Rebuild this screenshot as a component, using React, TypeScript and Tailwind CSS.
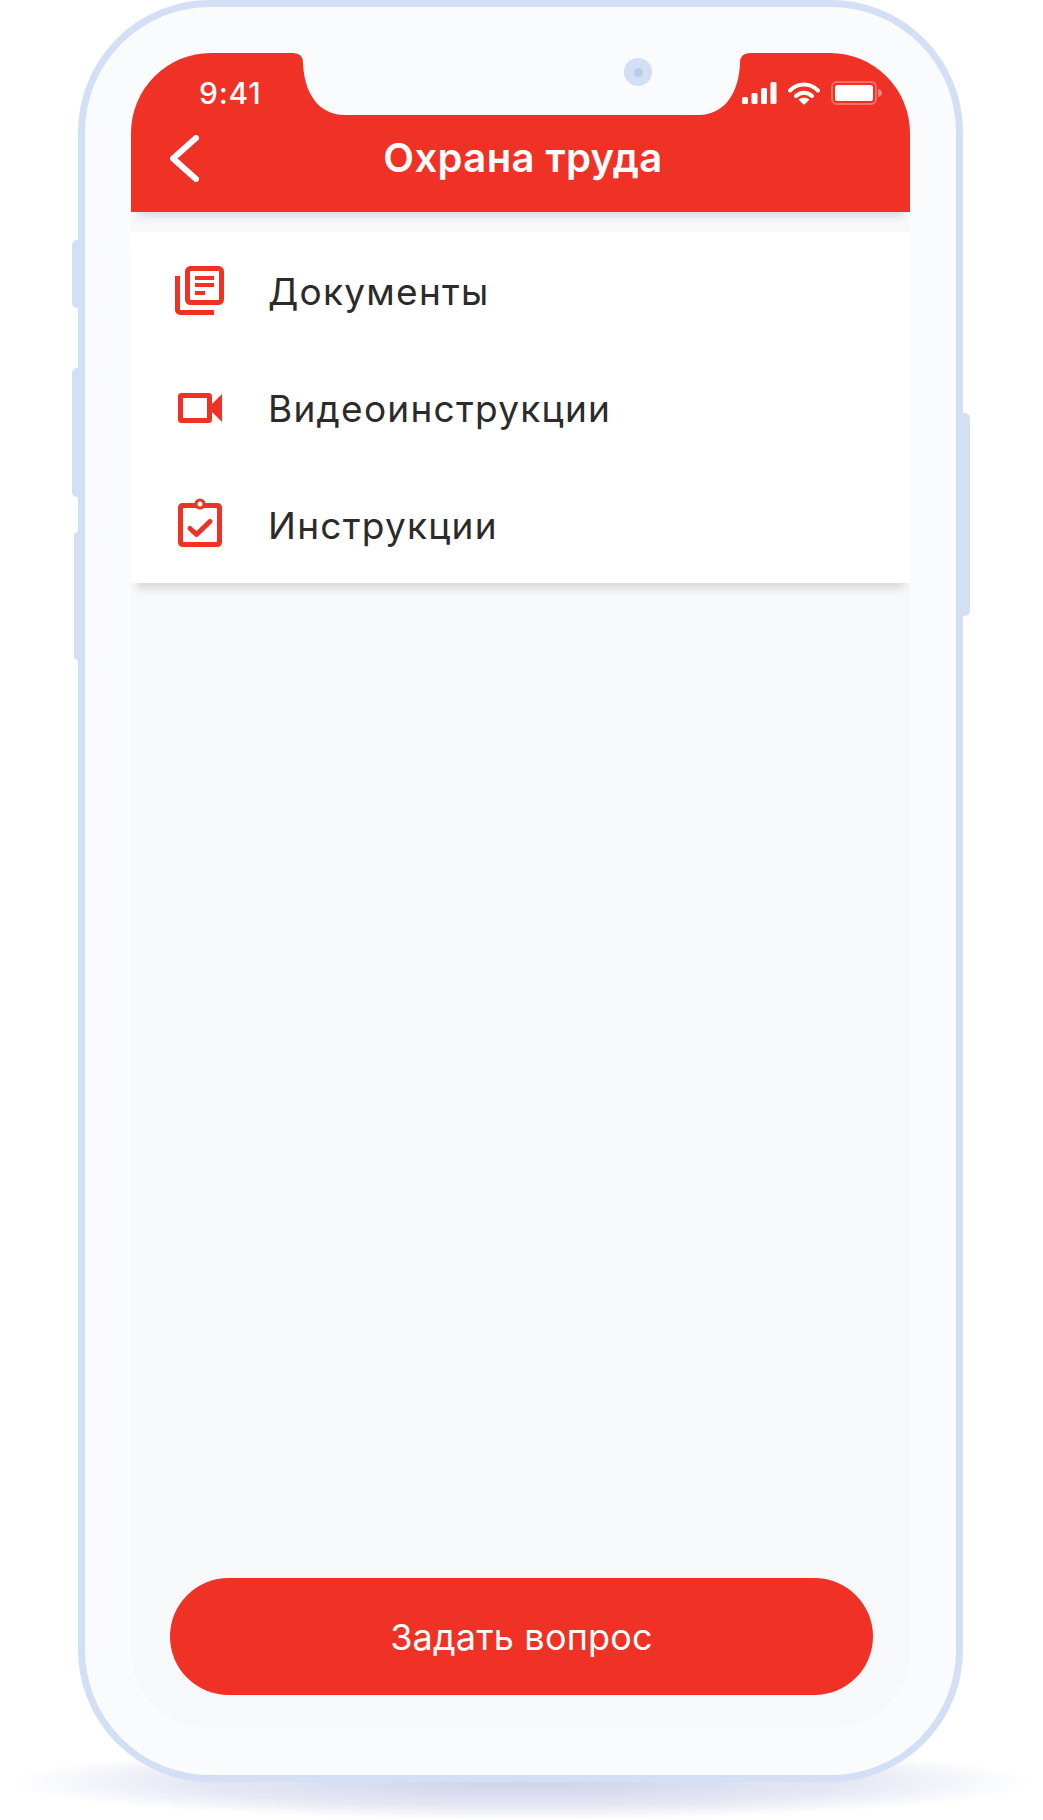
import React from "react";

const RED = "#f03226";

function DocsIcon() {
  return (
    <svg width="49" height="49" viewBox="0 0 49 49" fill="none">
      <path d="M2.5 10V44a2.5 2.5 0 0 0 2.5 2.5H39" stroke={RED} strokeWidth="5" />
      <rect x="12.5" y="2.5" width="34" height="34" rx="3" stroke={RED} strokeWidth="5" />
      <rect x="20" y="10" width="19" height="4" fill={RED} />
      <rect x="20" y="17" width="19" height="4" fill={RED} />
      <rect x="20" y="25" width="10" height="4" fill={RED} />
    </svg>
  );
}

function VideoIcon() {
  return (
    <svg width="44" height="30" viewBox="0 0 44 30" fill="none">
      <rect x="2.5" y="2.5" width="29" height="25" rx="1" stroke={RED} strokeWidth="5" />
      <path d="M33 12 44 1V29L33 18Z" fill={RED} />
    </svg>
  );
}

function ClipIcon() {
  return (
    <svg width="44" height="49" viewBox="0 0 44 49" fill="none" className="-mt-[4px]">
      <rect x="2.5" y="7.5" width="39" height="39" rx="2" stroke={RED} strokeWidth="5" />
      <circle cx="22" cy="6" r="4" fill="#fff" stroke={RED} strokeWidth="3" />
      <path d="M12 30.5 18.5 36.5 32 23.5" stroke={RED} strokeWidth="5" strokeLinecap="round" strokeLinejoin="round" />
    </svg>
  );
}

function Row({ icon, label }: { icon: React.ReactNode; label: string }) {
  return (
    <div className="flex h-[117px] items-center pl-[44px]">
      <div className="flex w-[49px] shrink-0 items-center justify-center">{icon}</div>
      <span className="ml-[44px] pt-[1px] text-[37px] leading-none tracking-[1.25px] text-[#2b2b2b]">{label}</span>
    </div>
  );
}

export default function App() {
  return (
    <div
      className="relative h-[1820px] w-[1043px] overflow-hidden bg-white pl-[78px]"
      style={{ fontFamily: '"Inter", "Noto Sans", sans-serif' }}
    >
      {/* floor shadow */}
      <div className="absolute bottom-[0px] left-[10px] h-[76px] w-[1023px] rounded-[50%] bg-[radial-gradient(closest-side,#cdd2ea_0%,#e6e8f4_65%,#ffffff_100%)]" />

      {/* side buttons */}
      <div className="absolute left-[72px] top-[240px] h-[68px] w-[10px] rounded-l-[5px] bg-[#d2dff5]" />
      <div className="absolute left-[72px] top-[368px] h-[129px] w-[10px] rounded-l-[5px] bg-[#d2dff5]" />
      <div className="absolute left-[74px] top-[532px] h-[128px] w-[8px] rounded-l-[4px] bg-[#d2dff5]" />
      <div className="absolute left-[960px] top-[413px] h-[203px] w-[10px] rounded-r-[5px] bg-[#d2dff5]" />

      {/* phone */}
      <div className="relative h-[1782px] w-[885px] rounded-[132px] border-[7px] border-[#d2dff5] bg-[#fafbfd] p-[46px]">
        <div className="flex h-[1675px] w-[779px] flex-col rounded-b-[76px] rounded-t-[80px] bg-[#f7f8fa]">
          {/* header */}
          <header className="relative z-10 h-[159px] shrink-0 rounded-t-[80px] bg-[#f03226] shadow-[0_10px_8px_-6px_rgba(0,0,0,0.12)]">
            {/* notch */}
            <svg className="absolute left-[162px] top-0" width="457" height="62" viewBox="0 0 457 62">
              <path
                d="M0 0Q10 0 10 10C11 38 24 62 52 62H405C433 62 446 38 447 10Q447 0 457 0Z"
                fill="#fafbfd"
              />
            </svg>
            {/* camera */}
            <div className="absolute left-[493px] top-[5px] flex h-[28px] w-[28px] items-center justify-center rounded-full bg-[#d2dff5]">
              <div className="h-[9px] w-[9px] rounded-full bg-[#bccce6]" />
            </div>
            <div className="relative flex h-[62px] items-end justify-between pb-[5px] pl-[68px] pr-[27px]">
              <span className="text-[30px] font-medium leading-[34px] tracking-[0.8px] text-white">9:41</span>
              <div className="flex items-center gap-[9px] pb-[5px]">
                <svg width="35" height="22" viewBox="0 0 35 22" fill="#fff">
                  <rect x="0" y="15" width="6" height="7" rx="1.5" />
                  <rect x="9.5" y="11" width="6" height="11" rx="1.5" />
                  <rect x="19" y="6" width="6" height="16" rx="1.5" />
                  <rect x="28.5" y="0" width="6" height="22" rx="1.5" />
                </svg>
                <svg width="32" height="23" viewBox="0 0 32 23" fill="none" className="ml-[2px]">
                  <path d="M2 8.5C10 .5 22 .5 30 8.5" stroke="#fff" strokeWidth="4" strokeLinecap="round" />
                  <path d="M8 14C12.5 9.5 19.5 9.5 24 14" stroke="#fff" strokeWidth="4" strokeLinecap="round" />
                  <path d="M16 23 10.5 17.5C13.5 15 18.5 15 21.5 17.5Z" fill="#fff" />
                </svg>
                <svg width="52" height="24" viewBox="0 0 52 24" fill="none" className="ml-[2px]">
                  <rect x="1" y="1" width="44" height="22" rx="5" stroke="#fff" strokeOpacity="0.3" strokeWidth="2" />
                  <rect x="4" y="4" width="38" height="16" rx="2.5" fill="#fff" />
                  <path d="M47 8C49.5 8.5 51 10 51 12S49.5 15.5 47 16Z" fill="#fff" fillOpacity="0.4" />
                </svg>
              </div>
            </div>
            <div className="grid h-[97px] grid-cols-[1fr_auto_1fr] items-center pb-[12px]">
              <svg className="ml-[39px] mt-[1px]" width="29" height="47" viewBox="0 0 29 47" fill="none">
                <path d="M26 3 3 23.5 26 44" stroke="#fff" strokeWidth="6" strokeLinecap="round" strokeLinejoin="round" />
              </svg>
              <h1 className="pl-[5px] text-center text-[40px] font-semibold leading-none tracking-[0.4px] text-white">Охрана труда</h1>
              <div />
            </div>
          </header>

          {/* list */}
          <div className="mt-[20px] shrink-0 bg-white shadow-[0_12px_8px_-6px_rgba(0,0,0,0.12)]">
            <Row icon={<DocsIcon />} label="Документы" />
            <Row icon={<VideoIcon />} label="Видеоинструкции" />
            <Row icon={<ClipIcon />} label="Инструкции" />
          </div>

          <div className="flex-1" />

          {/* button */}
          <button className="mb-[33px] ml-[39px] mr-[37px] flex h-[117px] shrink-0 items-center justify-center rounded-full bg-[#f03226] pt-[1px] text-[36px] tracking-[0.2px] text-white">
            Задать вопрос
          </button>
        </div>
      </div>
    </div>
  );
}
